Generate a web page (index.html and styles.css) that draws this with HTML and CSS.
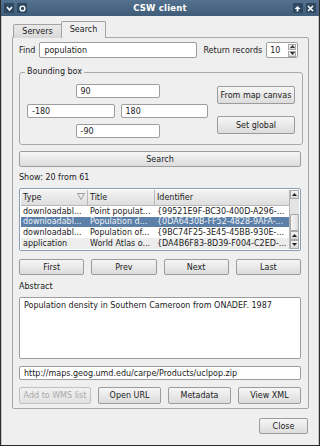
FILE: index.html
```html
<!DOCTYPE html>
<html>
<head>
<meta charset="utf-8">
<link rel="stylesheet" href="styles.css">
</head>
<body>
<div class="window">
  <div class="titlebar">
    <div class="tb-left">
      <span class="tbtn"><svg width="9" height="9" viewBox="0 0 9 9"><path d="M2 3 L4.5 6 L7 3" fill="none" stroke="#fff" stroke-width="1.6"/></svg></span>
      <span class="tbtn"><svg width="9" height="9" viewBox="0 0 9 9"><circle cx="4.5" cy="4.5" r="2.4" fill="none" stroke="#fff" stroke-width="1.4"/></svg></span>
    </div>
    <div class="title">CSW client</div>
    <div class="tb-right">
      <span class="tbtn"><svg width="9" height="9" viewBox="0 0 9 9"><path d="M1.5 5 L4.5 2 L7.5 5 Z" fill="#fff"/><rect x="3.6" y="4.5" width="1.8" height="3" fill="#fff"/></svg></span>
      <span class="tbtn"><svg width="9" height="9" viewBox="0 0 9 9"><path d="M2 2 L7 7 M7 2 L2 7" stroke="#fff" stroke-width="1.6"/></svg></span>
    </div>
  </div>
  <div class="body">
    <div class="tabs">
      <div class="tab">Servers</div>
      <div class="tab active">Search</div>
    </div>
    <div class="panel">
      <div class="find-row">
        <span class="lbl">Find</span>
        <div class="input find-input">population</div>
        <span class="lbl rr">Return records</span>
        <div class="input spin"><span>10</span>
          <div class="spin-btns">
            <div class="sb"><svg width="5" height="3" viewBox="0 0 5 3"><path d="M0 3 L2.5 0 L5 3Z" fill="#333"/></svg></div>
            <div class="sb"><svg width="5" height="3" viewBox="0 0 5 3"><path d="M0 0 L2.5 3 L5 0Z" fill="#333"/></svg></div>
          </div>
        </div>
      </div>

      <fieldset class="group">
        <legend>Bounding box</legend>
        <div class="bbox">
          <div class="coords">
            <div class="crow"><div class="input coord">90</div></div>
            <div class="crow two"><div class="input coord w">-180</div><div class="input coord w">180</div></div>
            <div class="crow"><div class="input coord">-90</div></div>
          </div>
          <div class="bbtns">
            <div class="btn">From map canvas</div>
            <div class="btn">Set global</div>
          </div>
        </div>
      </fieldset>

      <div class="btn search">Search</div>
      <div class="show">Show: 20 from 61</div>

      <div class="table">
        <div class="tmain">
          <div class="thead">
            <div class="c1 th">Type<svg class="sort" width="8" height="7" viewBox="0 0 8 7"><path d="M0.5 0.5 L7.5 0.5 L4 6.5 Z" fill="none" stroke="#888" stroke-width="0.8"/></svg></div>
            <div class="c2 th">Title</div>
            <div class="c3 th">Identifier</div>
          </div>
          <div class="trow"><div class="c1">downloadabl...</div><div class="c2">Point populat...</div><div class="c3">{99521E9F-BC30-400D-A296-...</div></div>
          <div class="trow sel"><div class="c1">downloadabl...</div><div class="c2">Population d...</div><div class="c3">{0DA6430B-FF52-4828-9AFA-...</div></div>
          <div class="trow"><div class="c1">downloadabl...</div><div class="c2">Population of...</div><div class="c3">{9BC74F25-3E45-45BB-930E-...</div></div>
          <div class="trow alt"><div class="c1">application</div><div class="c2">World Atlas o...</div><div class="c3">{DA4B6F83-8D39-F004-C2ED-...</div></div>
        </div>
        <div class="vscroll">
          <div class="sarrow top"><svg width="5" height="3" viewBox="0 0 5 3"><path d="M0 3 L2.5 0 L5 3Z" fill="#222"/></svg></div>
          <div class="strack"></div>
          <div class="shandle"></div>
          <div class="sarrow"><svg width="5" height="3" viewBox="0 0 5 3"><path d="M0 3 L2.5 0 L5 3Z" fill="#222"/></svg></div>
          <div class="sarrow"><svg width="5" height="3" viewBox="0 0 5 3"><path d="M0 0 L2.5 3 L5 0Z" fill="#222"/></svg></div>
        </div>
      </div>

      <div class="pager">
        <div class="btn">First</div>
        <div class="btn">Prev</div>
        <div class="btn">Next</div>
        <div class="btn">Last</div>
      </div>

      <div class="abs-lbl">Abstract</div>
      <div class="input abstract">Population density in Southern Cameroon from ONADEF. 1987</div>
      <div class="input url">http://maps.geog.umd.edu/carpe/Products/uclpop.zip</div>

      <div class="actions">
        <div class="btn disabled">Add to WMS list</div>
        <div class="btn">Open URL</div>
        <div class="btn">Metadata</div>
        <div class="btn">View XML</div>
      </div>
    </div>
    <div class="footer">
      <div class="btn close">Close</div>
    </div>
  </div>
</div>
</body>
</html>
```

FILE: styles.css
```css
* { box-sizing: border-box; }
html, body { margin: 0; padding: 0; }
body {
  width: 320px;
  height: 446px;
  overflow: hidden;
  font-family: "DejaVu Sans", sans-serif;
  font-size: 8px;
  color: #1a1a1a;
  background: #2a2a2a;
}
.window {
  width: 320px;
  height: 446px;
  display: flex;
  flex-direction: column;
  border: 1px solid #2b2b2b;
  border-top: none;
  background: #efefef;
}
.titlebar {
  height: 16px;
  flex: none;
  display: flex;
  align-items: center;
  justify-content: space-between;
  padding: 0 3px;
  background: linear-gradient(#54728f, #3f5c79);
  color: #fff;
}
.title {
  font-weight: bold;
  font-size: 8.5px;
  letter-spacing: 0.2px;
}
.tb-left, .tb-right { display: flex; gap: 3px; width: 24px; }
.tb-right { justify-content: flex-end; }
.tbtn {
  width: 10px;
  height: 10px;
  display: flex;
  align-items: center;
  justify-content: center;
  background: #2e4862;
  border-radius: 1px;
}
.body {
  flex: 1;
  display: flex;
  flex-direction: column;
  padding: 6px 9px 0 10px;
  border-left: 1px solid #c8c8c8;
  border-right: 1px solid #c8c8c8;
}
.tabs {
  display: flex;
  align-items: flex-end;
  height: 16px;
  padding-left: 1px;
  margin-bottom: -1px;
  position: relative;
  z-index: 1;
}
.tab {
  height: 14px;
  width: 49px;
  display: flex;
  align-items: center;
  justify-content: center;
  border: 1px solid #a2a2a2;
  border-bottom: none;
  border-radius: 2px 2px 0 0;
  background: linear-gradient(#e9e9e9, #d8d8d8);
}
.tab.active {
  height: 17px;
  width: 45px;
  background: #efefef;
  margin-left: -1px;
  padding-bottom: 1px;
}
.panel {
  height: 372px;
  border: 1px solid #a8a8a8;
  border-radius: 0 2px 2px 2px;
  padding: 4px 7px 0 6px;
  display: flex;
  flex-direction: column;
}
.input {
  background: #fff;
  border: 1px solid #9d9d9d;
  border-radius: 2px;
  height: 16px;
  padding: 0 4px;
  display: flex;
  align-items: center;
  white-space: nowrap;
  overflow: hidden;
}
.btn {
  height: 16px;
  border: 1px solid #9c9c9c;
  border-radius: 2px;
  background: linear-gradient(#f6f6f6, #dcdcdc);
  display: flex;
  align-items: center;
  justify-content: center;
  white-space: nowrap;
}
.btn.disabled { color: #a8a8a8; border-color: #c0c0c0; background: linear-gradient(#f2f2f2, #e2e2e2); }
.find-row {
  display: flex;
  align-items: center;
  height: 16px;
}
.lbl { margin-right: 4px; }
.find-input { width: 158px; }
.rr { margin-left: 6px; }
.spin {
  width: 32px;
  padding: 0 1px 0 3px;
  justify-content: space-between;
}
.spin-btns {
  display: flex;
  flex-direction: column;
  gap: 1px;
}
.sb {
  width: 8px;
  height: 6px;
  background: linear-gradient(#f4f4f4, #d6d6d6);
  border: 1px solid #a8a8a8;
  display: flex;
  align-items: center;
  justify-content: center;
}
.group {
  margin: 9px 0 0 0;
  padding: 6px 7px 8px 7px;
  border: 1px solid #a9a9a9;
  border-radius: 3px;
  height: 78px;
}
.group legend {
  padding: 0 2px;
  margin-left: -2px;
  line-height: 10px;
}
.bbox {
  display: flex;
  gap: 9px;
}
.coords {
  width: 181px;
  display: flex;
  flex-direction: column;
  gap: 6px;
  padding-top: 1px;
}
.crow { display: flex; justify-content: center; gap: 6px; }
.coord { width: 84px; height: 14px; }
.coord.w { width: 88px; }
.bbtns {
  width: 78px;
  display: flex;
  flex-direction: column;
  gap: 12px;
  padding-top: 3px;
}
.bbtns .btn { height: 18px; }
.search { margin-top: 6px; height: 16px; }
.show { margin-top: 6px; height: 10px; line-height: 10px; }
.table {
  margin-top: 5px;
  height: 63px;
  border: 1px solid #8b9db3;
  border-radius: 2px;
  background: #fff;
  display: flex;
  padding: 1px;
  overflow: hidden;
}
.tmain { flex: 1; display: flex; flex-direction: column; }
.thead {
  display: flex;
  height: 16px;
  background: linear-gradient(#f3f3f3, #dedede);
  border-bottom: 1px solid #b8b8b8;
}
.th {
  display: flex;
  align-items: center;
  border-right: 1px solid #b8b8b8;
  position: relative;
}
.sort { position: absolute; right: 2px; top: 3px; }
.trow { display: flex; height: 11px; align-items: center; }
.trow.sel { background: #5c80a7; color: #eef2f7; }
.trow.alt { background: #ededed; }
.c1, .c2, .c3 { padding-left: 2px; white-space: nowrap; overflow: hidden; height: 100%; display: flex; align-items: center; }
.c1 { width: 67px; }
.c2 { width: 67px; }
.c3 { flex: 1; }
.thead .c3 { border-right: none; }
.vscroll {
  width: 10px;
  display: flex;
  flex-direction: column;
  background: #dcdcdc;
  border-left: 1px solid #b5b5b5;
}
.sarrow {
  height: 9px;
  display: flex;
  align-items: center;
  justify-content: center;
  background: linear-gradient(#f4f4f4, #d8d8d8);
  border: 1px solid #a8a8a8;
}
.sarrow.top { height: 9px; }
.strack { height: 15px; background: #e4e4e4; }
.shandle { height: 17px; background: linear-gradient(90deg, #f4f4f4, #e0e0e0); border: 1px solid #a8a8a8; border-radius: 1px; }
.pager {
  margin-top: 8px;
  display: grid;
  grid-template-columns: repeat(4, 1fr);
  gap: 7px;
}
.pager .btn { height: 16px; }
.abs-lbl { margin-top: 7px; height: 10px; line-height: 10px; }
.abstract {
  margin-top: 5px;
  height: 62px;
  align-items: flex-start;
  padding: 3px 4px;
}
.url { margin-top: 7px; height: 14px; }
.actions {
  margin-top: 7px;
  display: grid;
  grid-template-columns: 72px 1fr 1fr 1fr;
  gap: 7px;
}
.actions .btn { height: 17px; }
.footer {
  display: flex;
  justify-content: flex-end;
  padding-top: 9px;
  padding-right: 1px;
}
.close { width: 49px; height: 16px; }
```
